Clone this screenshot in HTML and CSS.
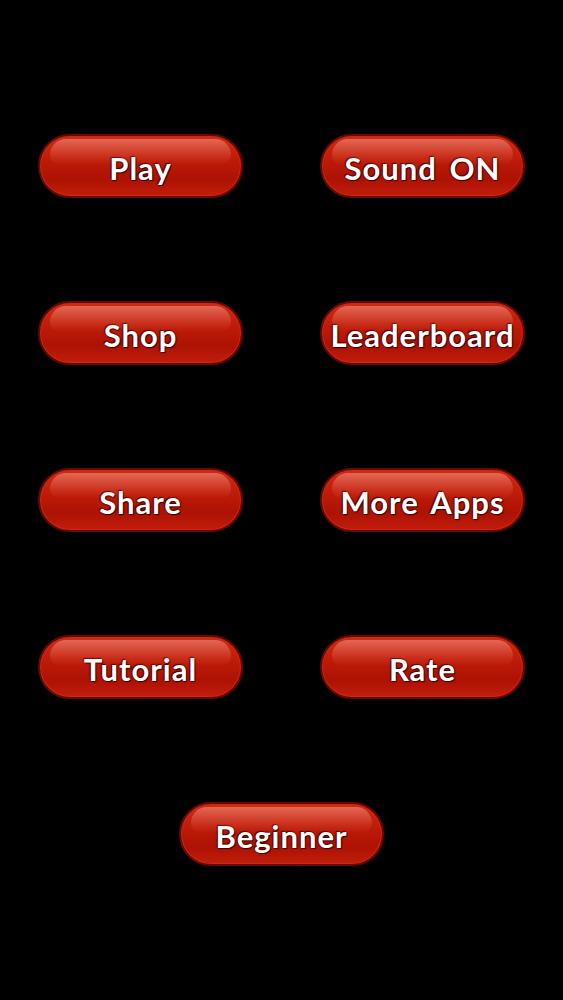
FILE: index.html
```html
<!DOCTYPE html>
<html>
<head>
<meta charset="utf-8">
<link rel="stylesheet" href="styles.css">
</head>
<body>
<div class="menu">
  <div class="btn">Play</div>
  <div class="btn">Sound ON</div>
  <div class="btn">Shop</div>
  <div class="btn">Leaderboard</div>
  <div class="btn">Share</div>
  <div class="btn">More Apps</div>
  <div class="btn">Tutorial</div>
  <div class="btn">Rate</div>
  <div class="btn wide">Beginner</div>
</div>
</body>
</html>
```
FILE: styles.css
```css
html, body {
  margin: 0;
  padding: 0;
  background: #000;
  height: 100%;
}
.menu {
  display: grid;
  grid-template-columns: 205px 205px;
  column-gap: 77px;
  row-gap: 103px;
  justify-content: center;
  padding-top: 134px;
}
.btn {
  position: relative;
  box-sizing: border-box;
  height: 64px;
  border-radius: 32px;
  border: 2px solid #6a0800;
  background: linear-gradient(180deg, #cf2a14 0%, #bb1907 45%, #ad1203 72%, #c21e0c 100%);
  box-shadow: inset 0 0 0 1px #c82a16, 0 1px 2px rgba(0,0,0,0.8);
  display: flex;
  align-items: center;
  justify-content: center;
  padding-top: 4px;
  color: #fff;
  font-family: "Comic Sans MS", Lato, "Open Sans", sans-serif;
  font-weight: bold;
  font-size: 31px;
  letter-spacing: 1px;
  word-spacing: 4px;
  text-shadow: 0 0 2px #3a0000, 1px 1px 1px #3a0000, -1px -1px 1px #5a0000;
  overflow: hidden;
}
.btn::before {
  content: "";
  position: absolute;
  left: 10px;
  right: 10px;
  top: 3px;
  height: 26px;
  border-radius: 22px 22px 14px 14px;
  background: linear-gradient(180deg, rgba(255,190,175,0.42) 0%, rgba(255,150,130,0.16) 65%, rgba(255,140,120,0) 100%);
}
.btn.wide {
  grid-column: 1 / span 2;
  justify-self: center;
  width: 205px;
}
```
